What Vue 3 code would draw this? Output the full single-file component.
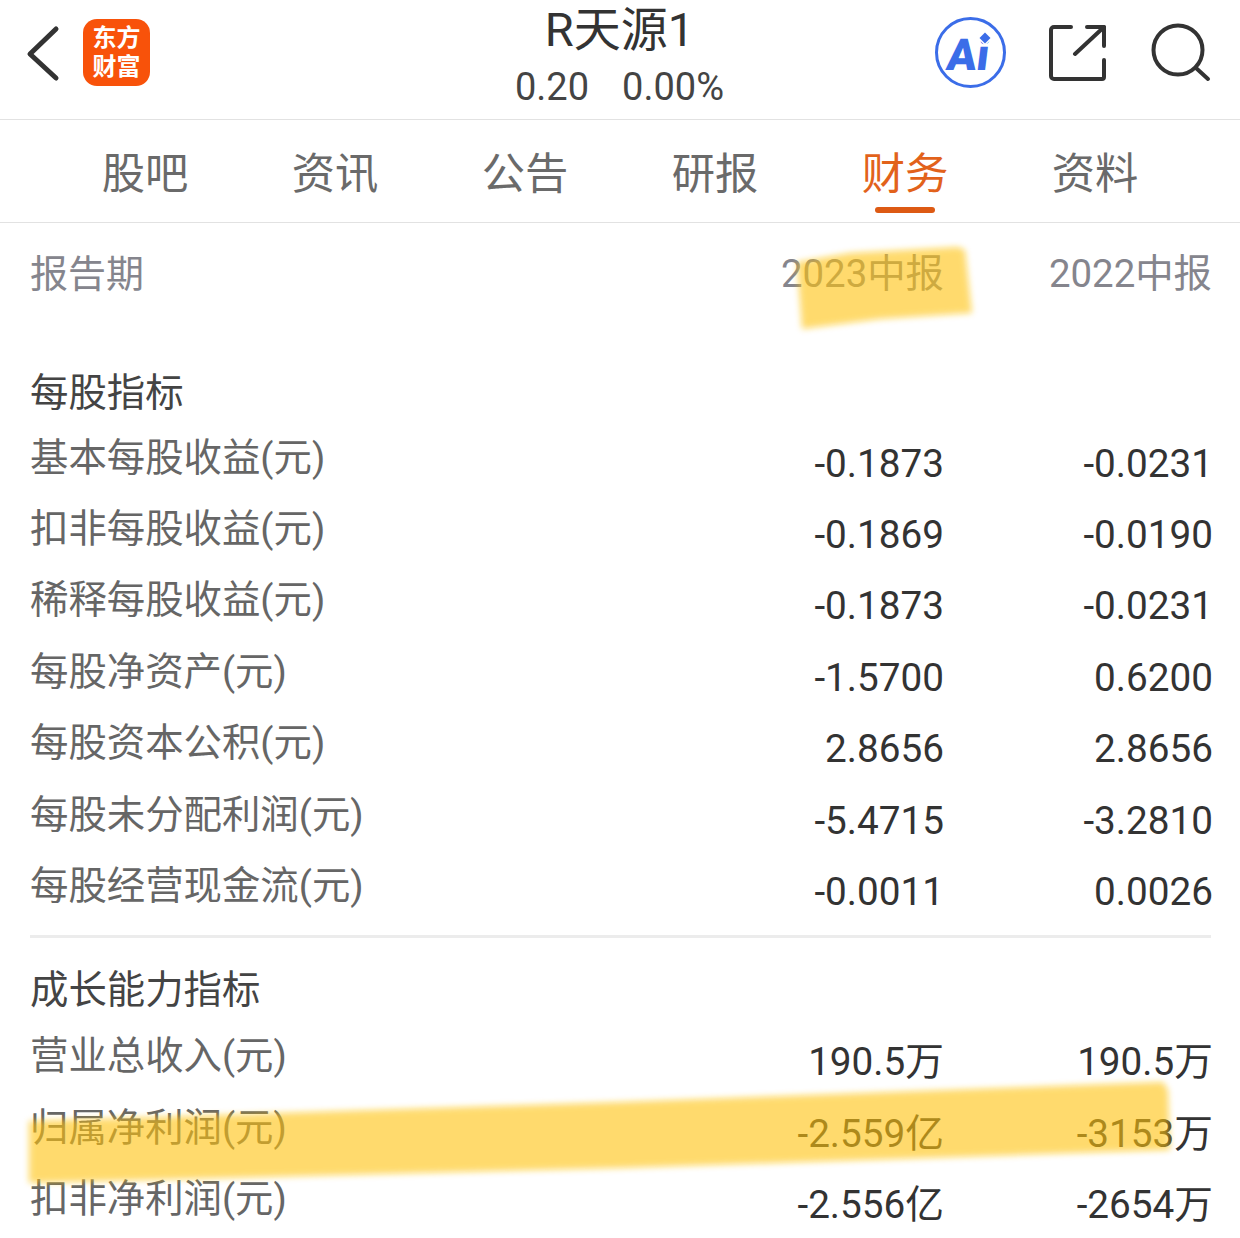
<script setup>
const tabs = ['股吧', '资讯', '公告', '研报', '财务', '资料']
const perShare = [
  ['基本每股收益(元)', '-0.1873', '-0.0231'],
  ['扣非每股收益(元)', '-0.1869', '-0.0190'],
  ['稀释每股收益(元)', '-0.1873', '-0.0231'],
  ['每股净资产(元)', '-1.5700', '0.6200'],
  ['每股资本公积(元)', '2.8656', '2.8656'],
  ['每股未分配利润(元)', '-5.4715', '-3.2810'],
  ['每股经营现金流(元)', '-0.0011', '0.0026'],
]
const growth = [
  ['营业总收入(元)', '190.5万', '190.5万'],
  ['归属净利润(元)', '-2.559亿', '-3153万'],
  ['扣非净利润(元)', '-2.556亿', '-2654万'],
]
</script>

<template>
  <div class="page">
    <header class="top">
      <div class="left">
        <svg class="back" width="36" height="60" viewBox="0 0 36 60">
          <path d="M31 6 L5 31 L31 55" fill="none" stroke="#333" stroke-width="5" stroke-linecap="round" stroke-linejoin="round" />
        </svg>
        <div class="logo"><span>东方</span><span>财富</span></div>
      </div>
      <div class="title">
        <div class="name">R天源1</div>
        <div class="quote"><span>0.20</span><span>0.00%</span></div>
      </div>
      <div class="actions">
        <div class="ai">
          <span class="ai-text">Ai</span>
          <svg class="ai-star" width="16" height="16" viewBox="0 0 16 16"><path d="M8 2.5 L13.5 8 L8 13.5 L2.5 8 Z" fill="#3b6de8" stroke="#fff" stroke-width="3" paint-order="stroke" /></svg>
        </div>
        <svg class="share" width="58" height="58" viewBox="0 0 58 58" fill="none" stroke="#333" stroke-width="4" stroke-linecap="round" stroke-linejoin="round">
          <path d="M23 3 H6 a3 3 0 0 0 -3 3 V52 a3 3 0 0 0 3 3 H54 a2 2 0 0 0 2 -2 V36" />
          <path d="M27 30 L56 3" />
          <path d="M39 3 H56 V22" />
        </svg>
        <svg class="search" width="62" height="62" viewBox="0 0 62 62" fill="none" stroke="#333" stroke-width="4" stroke-linecap="round">
          <circle cx="28" cy="27" r="24.5" />
          <path d="M46 45 L58 56" />
        </svg>
      </div>
    </header>

    <nav class="tabs">
      <div v-for="t in tabs" :key="t" class="tab" :class="{ active: t === '财务' }">{{ t }}</div>
    </nav>

    <section class="table">
      <div class="head">
        <span class="head-label">报告期</span>
        <span class="head-val">2023中报</span>
        <span class="head-val">2022中报</span>
      </div>

      <div class="sec-title">每股指标</div>
      <div v-for="r in perShare" :key="r[0]" class="row">
        <span class="label">{{ r[0] }}</span>
        <span class="val">{{ r[1] }}</span>
        <span class="val">{{ r[2] }}</span>
      </div>

      <div class="divider"></div>

      <div class="sec-title second">成长能力指标</div>
      <div v-for="r in growth" :key="r[0]" class="row">
        <span class="label">{{ r[0] }}</span>
        <span class="val">{{ r[1] }}</span>
        <span class="val">{{ r[2] }}</span>
      </div>
    </section>

    <svg class="marker" width="1240" height="1238" viewBox="0 0 1240 1238">
      <defs>
        <filter id="soft" x="-5%" y="-20%" width="110%" height="140%"><feGaussianBlur stdDeviation="3" /></filter>
      </defs>
      <g fill="#ffc308" filter="url(#soft)">
        <path d="M797 262 L850 253 L958 247 L965 250 L972 313 L880 319 L802 329 Z" />
        <path d="M29 1121 L620 1102 L1163 1082 L1168 1090 L1170 1150 L620 1168 L29 1183 Z" />
      </g>
    </svg>
  </div>
</template>

<style scoped>
.page {
  position: relative;
  width: 1240px;
  height: 1238px;
  overflow: hidden;
  background: #fff;
  font-family: Roboto, "Noto Sans CJK SC", sans-serif;
  color: #333;
}
.top {
  height: 119px;
  padding: 0 33px 0 25px;
  display: flex;
  align-items: center;
  justify-content: space-between;
  border-bottom: 1px solid #e2e2e2;
}
.left {
  display: flex;
  align-items: center;
  gap: 22px;
  width: 300px;
}
.logo {
  width: 67px;
  height: 67px;
  margin-top: -14px;
  border-radius: 14px;
  background: #f8520a;
  color: #fff;
  font-size: 24px;
  font-weight: 700;
  line-height: 29px;
  display: flex;
  flex-direction: column;
  align-items: center;
  justify-content: center;
}
.back {
  margin-top: -14px;
}
.title {
  text-align: center;
  margin-left: -21px;
  margin-top: -6px;
}
.name {
  font-size: 47px;
  line-height: 54px;
  color: #333;
}
.quote {
  display: flex;
  justify-content: center;
  gap: 33px;
  font-size: 38px;
  line-height: 46px;
  color: #444;
  margin-top: 7px;
}
.actions {
  display: flex;
  align-items: center;
  gap: 41px;
  margin-top: -14px;
}
.share {
  margin-left: 1px;
}
.search {
  margin-left: 3px;
  margin-right: -5px;
  margin-top: 3px;
}
.ai {
  position: relative;
  width: 71px;
  height: 71px;
  box-sizing: border-box;
  border: 3px solid #3b6de8;
  border-radius: 50%;
  display: flex;
  align-items: center;
  justify-content: center;
}
.ai-text {
  font-size: 44px;
  font-weight: 900;
  line-height: 1;
  color: #3b6de8;
  margin-left: -4px;
  margin-top: 4px;
  transform: skewX(-7deg);
}
.ai-star {
  position: absolute;
  left: 39px;
  top: 10px;
}
.tabs {
  height: 102px;
  padding-left: 50px;
  display: grid;
  grid-template-columns: repeat(6, 190px);
  border-bottom: 1px solid #e2e2e2;
}
.tab {
  position: relative;
  height: 102px;
  text-align: center;
  font-size: 43.3px;
  line-height: 110px;
  color: #6a6a6a;
}
.tab.active {
  color: #e2621b;
}
.tab.active::after {
  content: "";
  position: absolute;
  left: 65px;
  bottom: 9px;
  width: 60px;
  height: 6px;
  border-radius: 3px;
  background: #dd5a14;
}
.table {
  padding: 0 27px 0 30px;
}
.head,
.row {
  display: grid;
  grid-template-columns: 1fr 269px 269px;
}
.head {
  padding: 26px 0 63px;
  height: 50px;
  line-height: 50px;
  font-size: 38.4px;
  color: #85858d;
}
.head-label {
  font-size: 38px;
}
.head-val {
  text-align: right;
}
.head-val:last-child {
  margin-right: 1px;
}
.sec-title {
  height: 60px;
  line-height: 61px;
  font-size: 38.4px;
  color: #444;
}
.sec-title.second {
  margin-top: 21px;
  margin-bottom: 2px;
}
.row {
  height: 71.4px;
  align-items: center;
}
.label {
  font-size: 38.4px;
  line-height: 50px;
  color: #666;
}
.val {
  font-size: 38.7px;
  line-height: 50px;
  padding-top: 12px;
  text-align: right;
  color: #333;
}
.divider {
  height: 3px;
  margin-top: 13px;
  margin-right: 2px;
  background: #ececec;
}
.marker {
  position: absolute;
  left: 0;
  top: 0;
  pointer-events: none;
  opacity: 0.6;
}
</style>
